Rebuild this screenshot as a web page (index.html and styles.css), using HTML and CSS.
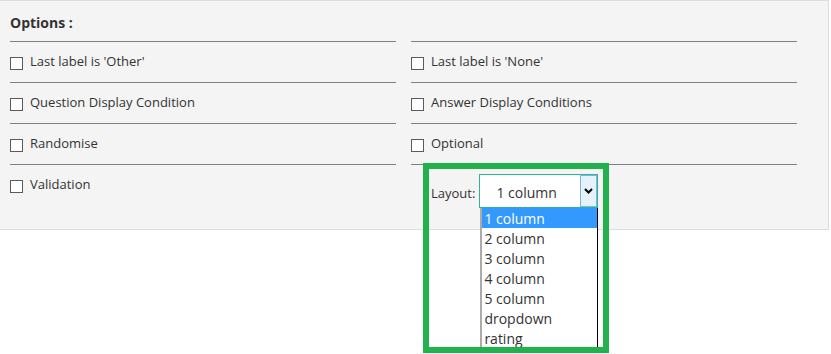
FILE: index.html
```html
<!DOCTYPE html>
<html>
<head>
<meta charset="utf-8">
<link rel="stylesheet" href="styles.css">
</head>
<body>
<div class="panel">
  <div class="grid">
    <div class="col">
      <div class="head">Options :</div>
      <div class="row"><span class="cb"></span><span class="lbl">Last label is 'Other'</span></div>
      <div class="row"><span class="cb"></span><span class="lbl">Question Display Condition</span></div>
      <div class="row"><span class="cb"></span><span class="lbl">Randomise</span></div>
      <div class="row"><span class="cb"></span><span class="lbl">Validation</span></div>
    </div>
    <div class="col">
      <div class="head"></div>
      <div class="row"><span class="cb"></span><span class="lbl">Last label is 'None'</span></div>
      <div class="row"><span class="cb"></span><span class="lbl">Answer Display Conditions</span></div>
      <div class="row"><span class="cb"></span><span class="lbl">Optional</span></div>
      <div class="row layout-row">
        <span class="layout-lbl">Layout:</span>
        <div class="select">
          <span class="select-val">1 column</span>
          <span class="select-btn"><svg width="9" height="6" viewBox="0 0 9 6"><path d="M1 1 L4.5 4.5 L8 1" fill="none" stroke="#000" stroke-width="2"/></svg></span>
          <ul class="list">
            <li class="sel">1 column</li>
            <li>2 column</li>
            <li>3 column</li>
            <li>4 column</li>
            <li>5 column</li>
            <li>dropdown</li>
            <li>rating</li>
          </ul>
        </div>
      </div>
    </div>
  </div>
</div>
<div class="highlight"></div>
</body>
</html>
```
FILE: styles.css
```css
html, body {
  margin: 0;
  padding: 0;
  background: #ffffff;
}
body {
  font-family: "Open Sans", "DejaVu Sans", sans-serif;
  color: #333333;
  width: 831px;
  height: 354px;
  overflow: hidden;
  position: relative;
}
.panel {
  width: 818px;
  height: 228px;
  padding-left: 10px;
  background: #f4f4f4;
  border-top: 1px solid #dddddd;
  border-right: 1px solid #dddddd;
  border-bottom: 1px solid #dddddd;
}
.grid {
  display: grid;
  grid-template-columns: 386px 386px;
  column-gap: 15px;
}
.col {
  display: flex;
  flex-direction: column;
}
.head {
  height: 40px;
  box-sizing: border-box;
  padding-top: 12px;
  font-size: 14px;
  line-height: 20px;
  font-weight: bold;
}
.row {
  height: 41px;
  box-sizing: border-box;
  border-top: 1px solid #808080;
  display: flex;
  align-items: flex-start;
  padding-top: 10px;
  font-size: 13px;
  line-height: 18px;
}
.cb {
  width: 13px;
  height: 13px;
  box-sizing: border-box;
  border: 1px solid #5a5a5a;
  background: #ffffff;
  margin-top: 5px;
  margin-right: 7px;
  flex: none;
}
.layout-row {
  padding-left: 20px;
  padding-top: 9px;
  align-items: center;
  height: 44px;
}
.layout-lbl {
  margin-right: 4px;
  padding-top: 4px;
}
.select {
  position: relative;
  width: 119px;
  height: 34px;
  box-sizing: border-box;
  border: 1px solid #2db695;
  background: #ffffff;
  display: flex;
}
.select-val {
  flex: 1;
  padding-left: 16px;
  font-size: 14px;
  line-height: 31px;
  padding-top: 2px;
}
.select-btn {
  width: 17px;
  box-sizing: border-box;
  border: 1px solid #7eb4ea;
  background: #e5f1fb;
  display: flex;
  align-items: center;
  justify-content: center;
}
.list {
  position: absolute;
  left: 0;
  top: 33px;
  width: 118px;
  box-sizing: border-box;
  margin: 0;
  padding: 0;
  list-style: none;
  background: #ffffff;
  border-left: 2px solid #ababab;
  border-right: 1px solid #000000;
  font-size: 14px;
  line-height: 21px;
}
.list li {
  padding-left: 2px;
  height: 20px;
}
.list li.sel {
  background: #3399ff;
  color: #ffffff;
}
.highlight {
  position: absolute;
  left: 423px;
  top: 163px;
  width: 186px;
  height: 190px;
  box-sizing: border-box;
  border: 6px solid #22b14c;
  pointer-events: none;
}
```
